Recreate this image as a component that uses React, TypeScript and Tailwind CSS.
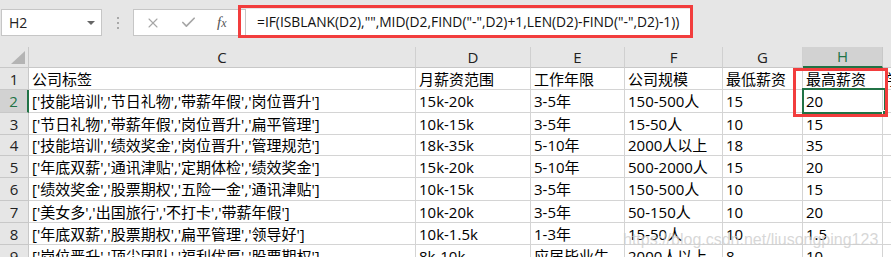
import { X, Check } from 'lucide-react'

const cols = ['C', 'D', 'E', 'F', 'G', 'H', 'I']

const rows: string[][] = [
  ['公司标签', '月薪资范围', '工作年限', '公司规模', '最低薪资', '最高薪资', '学历要求'],
  ["['技能培训','节日礼物','带薪年假','岗位晋升']", '15k-20k', '3-5年', '150-500人', '15', '20', ''],
  ["['节日礼物','带薪年假','岗位晋升','扁平管理']", '10k-15k', '3-5年', '15-50人', '10', '15', ''],
  ["['技能培训','绩效奖金','岗位晋升','管理规范']", '18k-35k', '5-10年', '2000人以上', '18', '35', ''],
  ["['年底双薪','通讯津贴','定期体检','绩效奖金']", '15k-20k', '5-10年', '500-2000人', '15', '20', ''],
  ["['绩效奖金','股票期权','五险一金','通讯津贴']", '10k-15k', '3-5年', '150-500人', '10', '15', ''],
  ["['美女多','出国旅行','不打卡','带薪年假']", '10k-20k', '3-5年', '50-150人', '10', '20', ''],
  ["['年底双薪','股票期权','扁平管理','领导好']", '10k-1.5k', '1-3年', '15-50人', '10', '1.5', ''],
  ["['岗位晋升','顶尖团队','福利优厚','股票期权']", '8k-10k', '应届毕业生', '2000人以上', '8', '10', ''],
]

// row heights in px, as measured off the sheet
const heights = ['h-[22px]', 'h-[23px]', 'h-[22px]', 'h-[21px]', 'h-[22px]', 'h-[23px]', 'h-[22px]', 'h-[22px]', 'h-[22px]']

function App() {
  return (
    <div className="relative w-[891px] h-[257px] overflow-hidden bg-[#e6e6e6] font-['Open_Sans','Noto_Sans_CJK_SC',sans-serif] text-[#000]">
      {/* formula bar */}
      <div className="flex items-start h-[47px] pt-[9px]">
        <div className="ml-[1px] w-[101px] h-[27px] bg-white border border-[#c6c6c6] flex items-center justify-between pl-[7px] pr-[6px]">
          <span className="text-[14px] text-[#222]">H2</span>
          <span className="w-0 h-0 border-l-[4px] border-r-[4px] border-t-[4px] border-l-transparent border-r-transparent border-t-[#666]" />
        </div>
        <div className="w-[31px] h-[27px] flex flex-col items-center justify-center gap-[3px]">
          <span className="w-[2px] h-[2px] bg-[#a8a8a8]" />
          <span className="w-[2px] h-[2px] bg-[#a8a8a8]" />
          <span className="w-[2px] h-[2px] bg-[#a8a8a8]" />
        </div>
        <div className="w-[112px] h-[27px] bg-white border border-[#c6c6c6] border-r-0 flex items-center pl-[11px]">
          <X className="w-[16px] h-[16px] text-[#a6a6a6]" strokeWidth={1.6} />
          <Check className="w-[17px] h-[17px] ml-[19px] text-[#a6a6a6]" strokeWidth={2.4} />
          <span className="ml-[20px] font-['Liberation_Serif',serif] italic text-[15px] text-[#555]">
            f<span className="text-[12px]">x</span>
          </span>
        </div>
        <div className="w-[445px] h-[27px] bg-white border-l border-[#c6c6c6] flex items-center pl-[11px]">
          <span className="text-[13.8px] text-[#111] whitespace-nowrap">
            =IF(ISBLANK(D2),"",MID(D2,FIND("-",D2)+1,LEN(D2)-FIND("-",D2)-1))
          </span>
        </div>
      </div>

      {/* sheet */}
      <div className="grid grid-cols-[29px_387px_115px_94px_98px_80px_80px_100px] bg-white">
        <div className="relative h-[21px] bg-[#e6e6e6] border-r border-b border-[#c8c8c8]">
          <svg className="absolute right-[3px] bottom-[3px]" width="14" height="13" viewBox="0 0 14 13">
            <polygon points="14,0 14,13 0,13" fill="#b4b4b4" />
          </svg>
        </div>
        {cols.map((c) =>
          c === 'H' ? (
            <div key={c} className="h-[21px] bg-[#d2d2d2] border-r border-[#c8c8c8] border-b-2 border-b-[#217346] flex items-center justify-center text-[15px] text-[#217346]">
              {c}
            </div>
          ) : (
            <div key={c} className="h-[21px] bg-[#e6e6e6] border-r border-b border-[#d0d0d0] border-b-[#c8c8c8] flex items-center justify-center text-[15px] text-[#222]">
              {c}
            </div>
          )
        )}

        {rows.map((r, i) => (
          <div key={i} className="contents">
            {i === 1 ? (
              <div className={`${heights[i]} bg-[#d2d2d2] border-r-2 border-r-[#217346] border-b border-b-[#c8c8c8] flex items-center justify-center pt-[1px] text-[15px] text-[#217346]`}>
                {i + 1}
              </div>
            ) : (
              <div className={`${heights[i]} bg-[#e6e6e6] border-r border-b border-[#c8c8c8] flex items-center justify-center pt-[1px] text-[15px] text-[#222]`}>
                {i + 1}
              </div>
            )}
            {r.map((v, j) => (
              <div
                key={j}
                className={`${heights[i]} border-r border-b border-[#d4d4d4] flex items-center pl-[3px] pt-[1px] text-[15px] whitespace-nowrap overflow-hidden`}
              >
                {v}
              </div>
            ))}
          </div>
        ))}
      </div>

      {/* active cell H2 */}
      <div className="absolute left-[802px] top-[88px] w-[84px] h-[26px] border-2 border-[#217346]">
        <span className="absolute right-[-4px] bottom-[-4px] w-[6px] h-[6px] bg-[#217346] border border-white" />
      </div>

      {/* red annotation boxes */}
      <div className="absolute left-[238px] top-[5px] w-[455px] h-[33px] border-[3px] border-[#f23d3d]" />
      <div className="absolute left-[793px] top-[68px] w-[95px] h-[49px] border-[3px] border-[#f23d3d]" />

      {/* watermark */}
      <div className="absolute left-[623px] top-[228px] font-['Liberation_Sans',sans-serif] text-[16px] text-[rgba(205,205,205,0.8)] whitespace-nowrap">
        https://blog.csdn.net/liusongping123
      </div>
    </div>
  )
}

export default App
